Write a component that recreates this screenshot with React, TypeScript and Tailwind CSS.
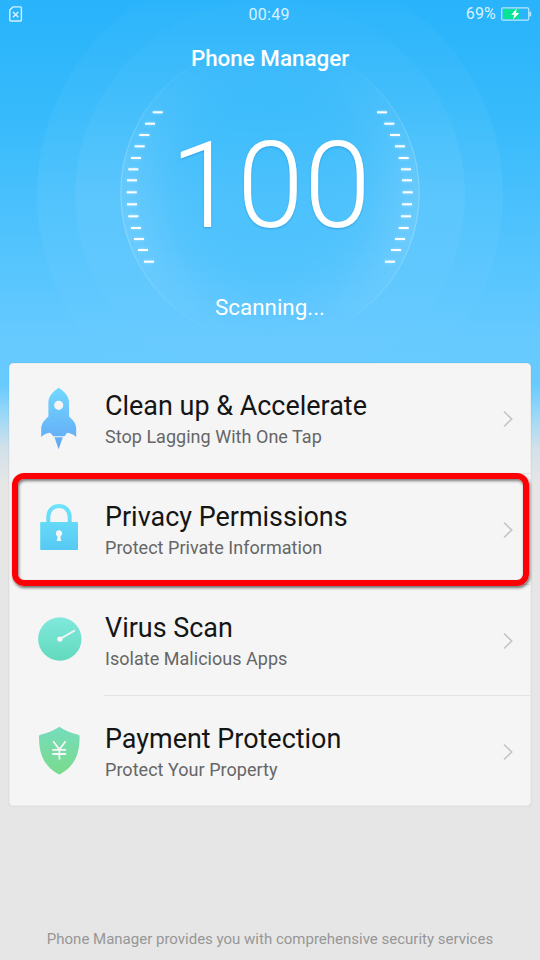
import React from "react";

const tickYs = [112.3, 123.7, 135, 146.3, 158, 169.3, 180.3, 192.3, 204.3, 216.3, 228, 239, 250, 261.7];
const leftXs = [152.7, 145, 139.3, 134.7, 131, 128.3, 127, 126.7, 127, 128.3, 131, 134, 138, 144];
const rightXs = [377, 384.3, 390, 395, 398.7, 401, 402, 402.7, 402, 401, 398.7, 395, 391, 385];

function Dial() {
  return (
    <svg className="absolute left-0 top-0" width="540" height="363" viewBox="0 0 540 363">
      <defs>
        <radialGradient id="ring">
          <stop offset="0.64" stopColor="#fff" stopOpacity="0" />
          <stop offset="1" stopColor="#fff" stopOpacity="0.075" />
        </radialGradient>
        <radialGradient id="core">
          <stop offset="0" stopColor="#1fb2fb" stopOpacity="0.26" />
          <stop offset="0.5" stopColor="#1fb2fb" stopOpacity="0.22" />
          <stop offset="0.95" stopColor="#1fb2fb" stopOpacity="0" />
        </radialGradient>
        <linearGradient id="fade" x1="0" y1="0" x2="0" y2="1">
          <stop offset="0.04" stopColor="#fff" stopOpacity="0" />
          <stop offset="0.4" stopColor="#fff" stopOpacity="1" />
          <stop offset="0.65" stopColor="#fff" stopOpacity="1" />
          <stop offset="0.97" stopColor="#fff" stopOpacity="0" />
        </linearGradient>
        <mask id="dialMask">
          <rect x="115" y="38" width="310" height="310" fill="url(#fade)" />
        </mask>
        <linearGradient id="soft" x1="0" y1="0" x2="0" y2="1">
          <stop offset="0" stopColor="#fff" stopOpacity="0.012" />
          <stop offset="0.5" stopColor="#fff" stopOpacity="0.055" />
          <stop offset="0.82" stopColor="#fff" stopOpacity="0.005" />
        </linearGradient>
        <filter id="glow" x="-20%" y="-20%" width="140%" height="140%">
          <feDropShadow dx="0" dy="0" stdDeviation="1.5" floodColor="#fff" floodOpacity="0.4" />
        </filter>
      </defs>
      <circle cx="270" cy="195" r="233" fill="url(#soft)" />
      <circle cx="270" cy="195" r="195" fill="url(#soft)" />
      <circle cx="270" cy="193" r="149.5" fill="url(#core)" />
      <g mask="url(#dialMask)">
        <circle cx="270" cy="193" r="149.5" fill="url(#ring)" />
        <circle cx="270" cy="193" r="149.2" fill="none" stroke="#fff" strokeOpacity="0.2" strokeWidth="1.3" />
      </g>
      <g fill="#fff" filter="url(#glow)">
        {tickYs.map((y, i) => (
          <React.Fragment key={y}>
            <rect x={leftXs[i]} y={y - 1} width="10" height="2" />
            <rect x={rightXs[i]} y={y - 1} width="10" height="2" />
          </React.Fragment>
        ))}
      </g>
    </svg>
  );
}

function Rocket() {
  return (
    <svg width="60" height="80" viewBox="0 -1 60 80">
      <defs>
        <linearGradient id="rocket" gradientUnits="userSpaceOnUse" x1="0" y1="8" x2="0" y2="69">
          <stop offset="0" stopColor="#72d8ff" />
          <stop offset="1" stopColor="#62a6f4" />
        </linearGradient>
      </defs>
      <path
        fill="url(#rocket)"
        fillRule="evenodd"
        d="M28.7 7.8C33 10.5 39 16 39 22V36.5C43 40 46.2 43.5 46.2 49V57C43.5 54.5 40 53 37.6 52.8C36.5 53.2 35.4 55 34.6 56.3H23C22 54.8 21 53 19.8 52.8C17 53 14 54.5 11.2 57V49C11.2 43.5 14.5 40 18.4 36.5V22C18.4 16 24.5 10.5 28.7 7.8ZM28.7 20.7a4.6 4.6 0 1 0 0 9.2a4.6 4.6 0 1 0 0-9.2Z"
      />
      <path fill="url(#rocket)" d="M24.5 57.3H32.8L28.6 69.3Z" />
    </svg>
  );
}

function Lock() {
  return (
    <svg width="60" height="80" viewBox="0 0 60 80">
      <defs>
        <linearGradient id="lock" gradientUnits="userSpaceOnUse" x1="0" y1="13" x2="0" y2="59">
          <stop offset="0" stopColor="#70e4fa" />
          <stop offset="1" stopColor="#57caf4" />
        </linearGradient>
      </defs>
      <path d="M18.3 33V27C18.3 12.2 39.7 12.2 39.7 27V33" fill="none" stroke="url(#lock)" strokeWidth="4" />
      <rect x="10.2" y="32" width="37.8" height="28" rx="1" fill="url(#lock)" />
      <path d="M29 40.3a3.1 3.1 0 0 1 1.6 5.8V48.2L31.4 51H26.6L27.4 48.2V46.1A3.1 3.1 0 0 1 29 40.3Z" fill="#f5f5f5" />
    </svg>
  );
}

function Gauge() {
  return (
    <svg width="60" height="80" viewBox="0 0 60 80">
      <defs>
        <linearGradient id="gauge" x1="0" y1="0" x2="0" y2="1">
          <stop offset="0" stopColor="#80e8dc" />
          <stop offset="1" stopColor="#62dabd" />
        </linearGradient>
      </defs>
      <circle cx="29.8" cy="38" r="21.7" fill="url(#gauge)" />
      <path d="M30 38L44.3 29.8" stroke="#f7f7f7" strokeWidth="1.8" strokeLinecap="round" />
      <circle cx="29.9" cy="38.1" r="2.7" fill="#f7f7f7" />
    </svg>
  );
}

function Shield() {
  return (
    <svg width="60" height="80" viewBox="0 0 60 80">
      <defs>
        <linearGradient id="shield" x1="0" y1="0" x2="0" y2="1">
          <stop offset="0" stopColor="#76dcbd" />
          <stop offset="1" stopColor="#79db8c" />
        </linearGradient>
      </defs>
      <path
        fill="url(#shield)"
        d="M29.3 14.8C34.5 18.5 41 21.3 48.2 22.7Q49.6 23 49.6 24.5C49.6 39 46.5 53 30.6 61.9Q29.3 62.6 28 61.9C12.1 53 9 39 9 24.5Q9 23 10.4 22.7C17.6 21.3 24.1 18.5 29.3 14.8Z"
      />
      <path d="M23.2 29.3L29.4 37.5L35.6 29.3M29.4 37.5V47.5M22.3 37.9H36.1M22.3 42H36.1" fill="none" stroke="#f7f7f7" strokeWidth="1.8" />
    </svg>
  );
}

const rows = [
  { icon: <Rocket />, title: "Clean up & Accelerate", sub: "Stop Lagging With One Tap" },
  { icon: <Lock />, title: "Privacy Permissions", sub: "Protect Private Information" },
  { icon: <Gauge />, title: "Virus Scan", sub: "Isolate Malicious Apps" },
  { icon: <Shield />, title: "Payment Protection", sub: "Protect Your Property" },
];

export default function App() {
  return (
    <div className="relative flex h-[960px] w-[540px] flex-col overflow-hidden bg-[#e6e6e6] bg-[linear-gradient(180deg,#28b3fb_0px,#36bafb_110px,#66caff_340px,#68cbff_385px,#9bd8f8_415px,#d2e1e9_448px,#e6e6e6_485px)] font-[Roboto,sans-serif] text-white">
      <Dial />
      <header className="relative flex h-7 items-center justify-between pl-[9px] pr-2 text-[16px] text-[#d9f2ff]">
        <svg width="14" height="16" viewBox="0 0 14 16" fill="none" stroke="#d9f2ff">
          <path d="M4 .9H11.5Q12.4 .9 12.4 1.8V14Q12.4 15 11.5 15H1.7Q.8 15 .8 14V4Z" strokeWidth="1.4" />
          <path d="M4 6L9.3 11.2M9.3 6L4 11.2" strokeWidth="1.5" />
        </svg>
        <span className="absolute left-[248.5px] top-[3px] leading-6 tracking-[0.3px]">00:49</span>
        <div className="flex items-center gap-[5px]">
          <span className="leading-6 tracking-[0.2px]">69%</span>
          <svg width="31" height="14" viewBox="0 0 31 14">
            <rect x="2" y="2" width="16.5" height="10" fill="#08e398" />
            <rect x=".7" y=".8" width="27" height="12.3" rx="1.2" fill="none" stroke="#b9e9ff" strokeWidth="1.2" />
            <rect x="28.2" y="4.8" width="2" height="4.5" fill="#b9e9ff" />
            <path d="M15.8 1.6L10.2 7.8H13.3L12 12.4L18.2 6H14.9Z" fill="#fff" />
          </svg>
        </div>
      </header>
      <section className="relative h-[335px] text-center">
        <h1 className="pt-[15px] text-[22.4px] font-medium leading-[30px]">Phone Manager</h1>
        <div className="mt-[42px] pl-px text-[120.5px] font-light leading-[142px] [text-shadow:0_1px_2px_rgba(0,110,190,0.4)]">100</div>
        <p className="mt-[36px] text-[22.4px] leading-[28px]">Scanning...</p>
      </section>
      <main className="relative mx-[9px] h-[443px] w-[522px] rounded-[4px] border border-[#ededed] bg-[#f5f5f5] shadow-[0_0_2px_rgba(0,0,0,0.12)]">
        {rows.map((row, i) => (
          <div key={row.title} className="relative flex h-[111px] items-center">
            <div className="mb-[2px] ml-5 h-20 w-[60px]">{row.icon}</div>
            <div className="ml-[15px] grow">
              <h2 className="text-[26.95px] leading-[34px] text-[#151515]">{row.title}</h2>
              <p className="text-[18px] leading-[28px] tracking-[0.03px] text-[#666]">{row.sub}</p>
            </div>
            <svg className="mb-[2px] mr-[17px]" width="10" height="18" viewBox="0 0 10 18" fill="none" stroke="#c4c4c4" strokeWidth="1.6">
              <path d="M1 1.5L8.7 9L1 16.5" />
            </svg>
            {i < 3 && <div className="absolute bottom-px left-[94px] right-0 h-px bg-[#e2e2e2]" />}
          </div>
        ))}
        <div className="absolute left-[2px] top-[109px] h-[113px] w-[517px] rounded-[12px] border-[6px] border-[#fd0006] shadow-[1px_2px_3px_rgba(0,0,0,0.55),inset_1px_2px_3px_rgba(0,0,0,0.5)]" />
      </main>
      <footer className="flex grow items-end justify-center pb-[9px] text-[15px] leading-6 text-[#969696]">
        Phone Manager provides you with comprehensive security services
      </footer>
    </div>
  );
}
